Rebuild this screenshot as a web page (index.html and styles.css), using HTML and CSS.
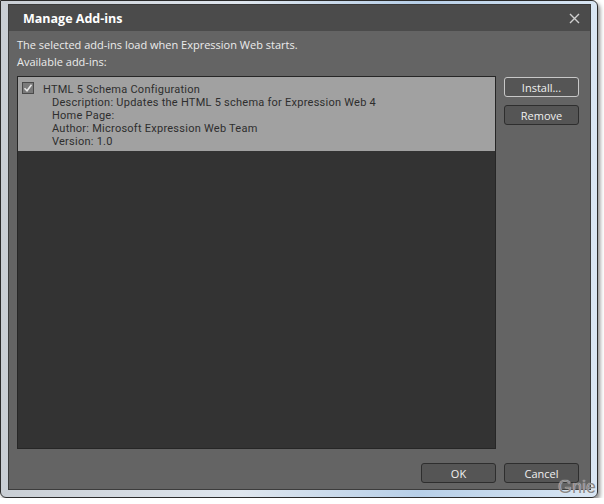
FILE: index.html
```html
<!DOCTYPE html>
<html lang="en">
<head>
  <meta charset="UTF-8">
  <title>Manage Add-ins</title>
  <link rel="stylesheet" href="styles.css">
</head>
<body>

  <div class="window">
    <div class="dialog">
      <div class="titlebar">
        <span class="title">Manage Add-ins</span>
        <svg class="close" width="11" height="11" viewBox="0 0 11 11">
          <path d="M1 1 L10 10 M10 1 L1 10" stroke="#d0d0d0" stroke-width="1.4" fill="none"/>
        </svg>
      </div>

      <div class="content">
        <p class="line">The selected add-ins load when Expression Web starts.</p>
        <p class="line">Available add-ins:</p>

        <div class="main">
          <div class="list">
            <div class="item">
              <svg class="check" width="12" height="12" viewBox="0 0 12 12">
                <rect x="0.5" y="0.5" width="11" height="11" fill="#7a7a7a" stroke="#4a4a4a"/>
                <path d="M2.5 6.2 L5 8.8 L9.5 2.8" stroke="#e6e6e6" stroke-width="1.6" fill="none"/>
              </svg>
              <div class="info">
                <div class="name">HTML 5 Schema Configuration</div>
                <div class="detail">Description: Updates the HTML 5 schema for Expression Web 4</div>
                <div class="detail">Home Page:</div>
                <div class="detail">Author: Microsoft Expression Web Team</div>
                <div class="detail">Version: 1.0</div>
              </div>
            </div>
          </div>

          <div class="side">
            <button class="btn default">Install...</button>
            <button class="btn">Remove</button>
          </div>
        </div>

        <div class="footer">
          <button class="btn">OK</button>
          <button class="btn">Cancel</button>
        </div>
      </div>
    </div>
    <span class="watermark">Gnie</span>
  </div>

</body>
</html>
```

FILE: styles.css
```css
body {
  margin: 0;
  background: #ffffff;
  font-family: "Open Sans", "DejaVu Sans", sans-serif;
  font-size: 11px;
}

.window {
  position: relative;
  width: 583px;
  height: 486px;
  padding: 3px 6px 7px 7px;
  border: 1px solid #2c2c2c;
  border-radius: 0 6px 6px 6px;
  background: linear-gradient(to right, #c9ced4, #dfe6ee 40%, #b7cfe8 70%, #d9e6f3);
  box-shadow: 2px 3px 4px rgba(0,0,0,0.45);
}

.dialog {
  height: 100%;
  display: flex;
  flex-direction: column;
  background: #646464;
  border: 1px solid #3c3c3c;
  box-sizing: border-box;
}

.titlebar {
  height: 26px;
  flex: none;
  display: flex;
  align-items: center;
  justify-content: space-between;
  padding: 0 10px 0 14px;
  background: #4b4b4b;
}
.title {
  color: #ffffff;
  font-weight: bold;
  font-size: 12.5px;
}

.content {
  flex: 1;
  display: flex;
  flex-direction: column;
  padding: 5px 11px 6px 8px;
}

.line {
  margin: 0;
  line-height: 17px;
  color: #ececec;
}

.main {
  flex: 1;
  display: flex;
  gap: 8px;
  margin-top: 6px;
}

.list {
  flex: 1;
  background: #333333;
  border: 1px solid #262626;
}

.item {
  display: flex;
  align-items: flex-start;
  gap: 9px;
  padding: 4px 6px 3px 4px;
  background: #a1a1a1;
  color: #2e2e2e;
  font-family: Roboto, "Open Sans", sans-serif;
  font-size: 11px;
  letter-spacing: 0.25px;
  line-height: 13px;
}
.check {
  margin-top: 1px;
  flex: none;
}
.info {
  padding-top: 2px;
}
.detail {
  padding-left: 9px;
}

.side {
  width: 75px;
  display: flex;
  flex-direction: column;
  gap: 8px;
  padding-top: 1px;
}

.btn {
  width: 75px;
  height: 20px;
  padding: 0;
  background: #555555;
  color: #f0f0f0;
  border: 1px solid #2e2e2e;
  border-radius: 3px;
  font-family: inherit;
  font-size: 11px;
}
.btn.default {
  border-color: #c8c8c8;
}

.footer {
  display: flex;
  justify-content: flex-end;
  gap: 8px;
  margin-top: 14px;
}

.watermark {
  position: absolute;
  right: 1px;
  bottom: 0;
  font-family: "Liberation Sans", sans-serif;
  font-size: 18px;
  line-height: 20px;
  color: #8a8a8a;
  text-shadow: 0 0 1px #ffffff;
}
```
